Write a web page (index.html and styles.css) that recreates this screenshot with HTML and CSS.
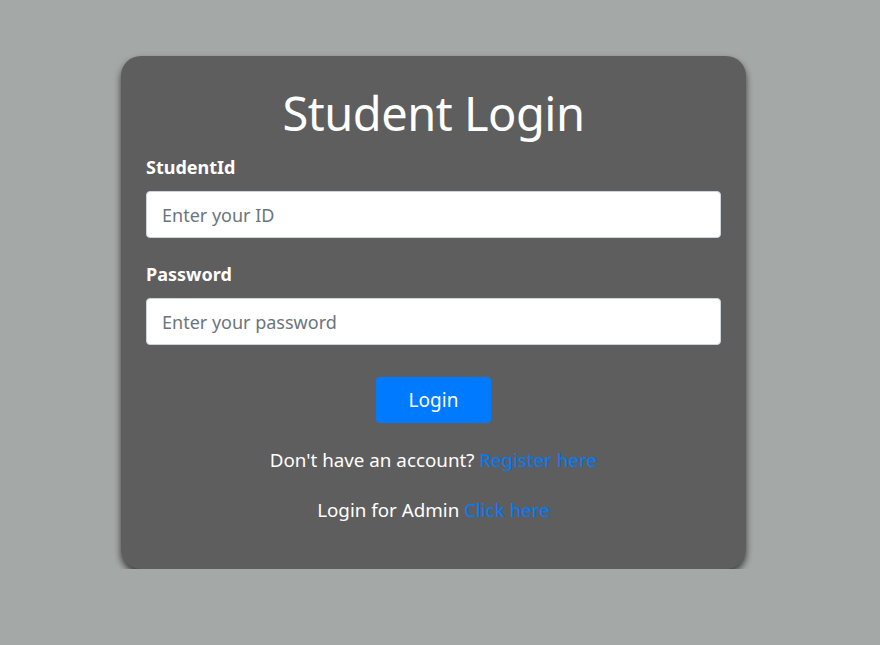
FILE: index.html
```html
<!DOCTYPE html>
<html>
<head>
<meta charset="utf-8">
<link rel="stylesheet" href="styles.css">
</head>
<body>
<div class="page">
  <div class="card">
    <h1 class="title">Student Login</h1>
    <form class="form">
      <div class="field">
        <label class="label">StudentId</label>
        <input class="input" type="text" placeholder="Enter your ID">
      </div>
      <div class="field">
        <label class="label">Password</label>
        <input class="input" type="password" placeholder="Enter your password">
      </div>
      <div class="actions">
        <button class="btn" type="button">Login</button>
      </div>
    </form>
    <p class="note">Don't have an account? <a class="link" href="#">Register here</a></p>
    <p class="note">Login for Admin <a class="link" href="#">Click here</a></p>
  </div>
</div>
</body>
</html>
```
FILE: styles.css
```css
html, body {
  margin: 0;
  padding: 0;
  background: #a4a8a7;
  font-family: "Noto Sans", "Open Sans", sans-serif;
}
.page {
  padding: 56px 0 0 121px;
}
.card {
  width: 625px;
  box-sizing: border-box;
  background: #5e5e5e;
  border-radius: 20px;
  padding: 25px 25px 46px;
  box-shadow: 0 4px 7px rgba(0,0,0,0.65);
  color: #fff;
}
.title {
  margin: 0;
  text-align: center;
  font-weight: 400;
  font-size: 47px;
  line-height: 64px;
  letter-spacing: -0.5px;
}
.form {
  margin: 10px 0 0;
}
.field {
  display: flex;
  flex-direction: column;
  margin-bottom: 24px;
}
.label {
  font-weight: 700;
  font-size: 18px;
  line-height: 25px;
  margin-bottom: 11px;
}
.input {
  height: 47px;
  box-sizing: border-box;
  border: 1px solid #ced4da;
  border-radius: 4px;
  padding: 0 15px;
  font-family: inherit;
  font-size: 18px;
  color: #495057;
  background: #fff;
}
.input::placeholder {
  color: #6c757d;
}
.actions {
  display: flex;
  justify-content: center;
  margin-top: 32px;
}
.btn {
  width: 115px;
  height: 46px;
  border: none;
  border-radius: 4px;
  background: #007bff;
  color: #fff;
  font-family: inherit;
  font-size: 19px;
}
.note {
  margin: 24px 0 0;
  text-align: center;
  font-size: 18.8px;
  line-height: 26px;
}
.note + .note {
  margin-top: 24px;
}
.link {
  color: #007bff;
  text-decoration: none;
}
```
